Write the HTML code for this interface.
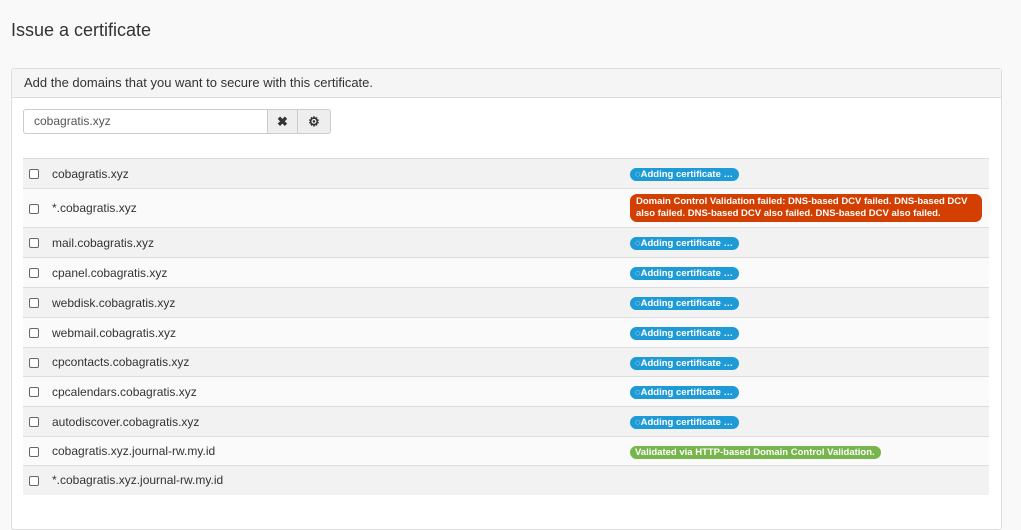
<!DOCTYPE html><html><head><style>
body{margin:0;background:#f9f9f9;font-family:"Liberation Sans",sans-serif;color:#333;width:1021px;height:515px;overflow:hidden;position:relative}
h1{position:absolute;left:11px;top:20px;margin:0;font-size:18px;font-weight:normal;color:#333}
.panel{position:absolute;left:11px;top:68px;width:989px;height:460px;border:1px solid #ddd;border-radius:3px;background:#fff}
.ph{height:28px;background:#f5f5f5;border-bottom:1px solid #ddd;font-size:13px;line-height:28px;padding-left:12px}
.inp{position:absolute;left:11px;top:40px;height:25px;border:1px solid #ccc;border-radius:3px 0 0 3px;font-size:12px;line-height:23px;padding-left:10px;box-sizing:border-box;width:245px;color:#555}
.b{position:absolute;top:40px;height:25px;border:1px solid #ccc;background:#eee;box-sizing:border-box;font-size:13px;text-align:center;line-height:23px;font-weight:bold}
table{position:absolute;left:11px;top:89px;width:966px;border-collapse:collapse;font-size:12px}
td{border-top:1px solid #ddd;padding:0}
tr:nth-child(odd){background:#f2f2f2}tr:nth-child(even){background:#fafafa}
.cb{display:inline-block;width:8px;height:8px;border:1px solid #666;border-radius:2px;margin:0 13px 0 6px;vertical-align:middle;background:#fff}
.bd{display:inline-block;background:#1e9ad6;color:#fff;font-size:9.5px;font-weight:bold;border-radius:7px;padding:1px 6px 1px 5px;line-height:11px}
.r{background:#d23f00;border-radius:7px;padding:2px 6px;line-height:12px;width:340px;display:block;font-size:9.5px}
.g{background:#76b64c}
</style></head><body>
<h1>Issue a certificate</h1>
<div class="panel"><div class="ph">Add the domains that you want to secure with this certificate.</div>
<div class="inp">cobagratis.xyz</div>
<div class="b" style="left:255px;width:31px">✖</div>
<div class="b" style="left:285px;width:34px;border-radius:0 3px 3px 0">⚙</div>
<table>
<tr style="height:30px"><td style="width:607px"><span class="cb"></span>cobagratis.xyz</td><td><span class="bd">◌Adding certificate …</span></td></tr>
<tr style="height:39px"><td><span class="cb"></span>*.cobagratis.xyz</td><td style="padding-right:6px"><span class="bd r">Domain Control Validation failed: DNS-based DCV failed. DNS-based DCV also failed. DNS-based DCV also failed. DNS-based DCV also failed.</span></td></tr>
<tr style="height:30px"><td><span class="cb"></span>mail.cobagratis.xyz</td><td><span class="bd">◌Adding certificate …</span></td></tr>
<tr style="height:30px"><td><span class="cb"></span>cpanel.cobagratis.xyz</td><td><span class="bd">◌Adding certificate …</span></td></tr>
<tr style="height:30px"><td><span class="cb"></span>webdisk.cobagratis.xyz</td><td><span class="bd">◌Adding certificate …</span></td></tr>
<tr style="height:30px"><td><span class="cb"></span>webmail.cobagratis.xyz</td><td><span class="bd">◌Adding certificate …</span></td></tr>
<tr style="height:29px"><td><span class="cb"></span>cpcontacts.cobagratis.xyz</td><td><span class="bd">◌Adding certificate …</span></td></tr>
<tr style="height:30px"><td><span class="cb"></span>cpcalendars.cobagratis.xyz</td><td><span class="bd">◌Adding certificate …</span></td></tr>
<tr style="height:30px"><td><span class="cb"></span>autodiscover.cobagratis.xyz</td><td><span class="bd">◌Adding certificate …</span></td></tr>
<tr style="height:29px"><td><span class="cb"></span>cobagratis.xyz.journal-rw.my.id</td><td><span class="bd g">Validated via HTTP-based Domain Control Validation.</span></td></tr>
<tr style="height:29px"><td><span class="cb"></span>*.cobagratis.xyz.journal-rw.my.id</td><td></td></tr>
</table></div>
</body></html>
